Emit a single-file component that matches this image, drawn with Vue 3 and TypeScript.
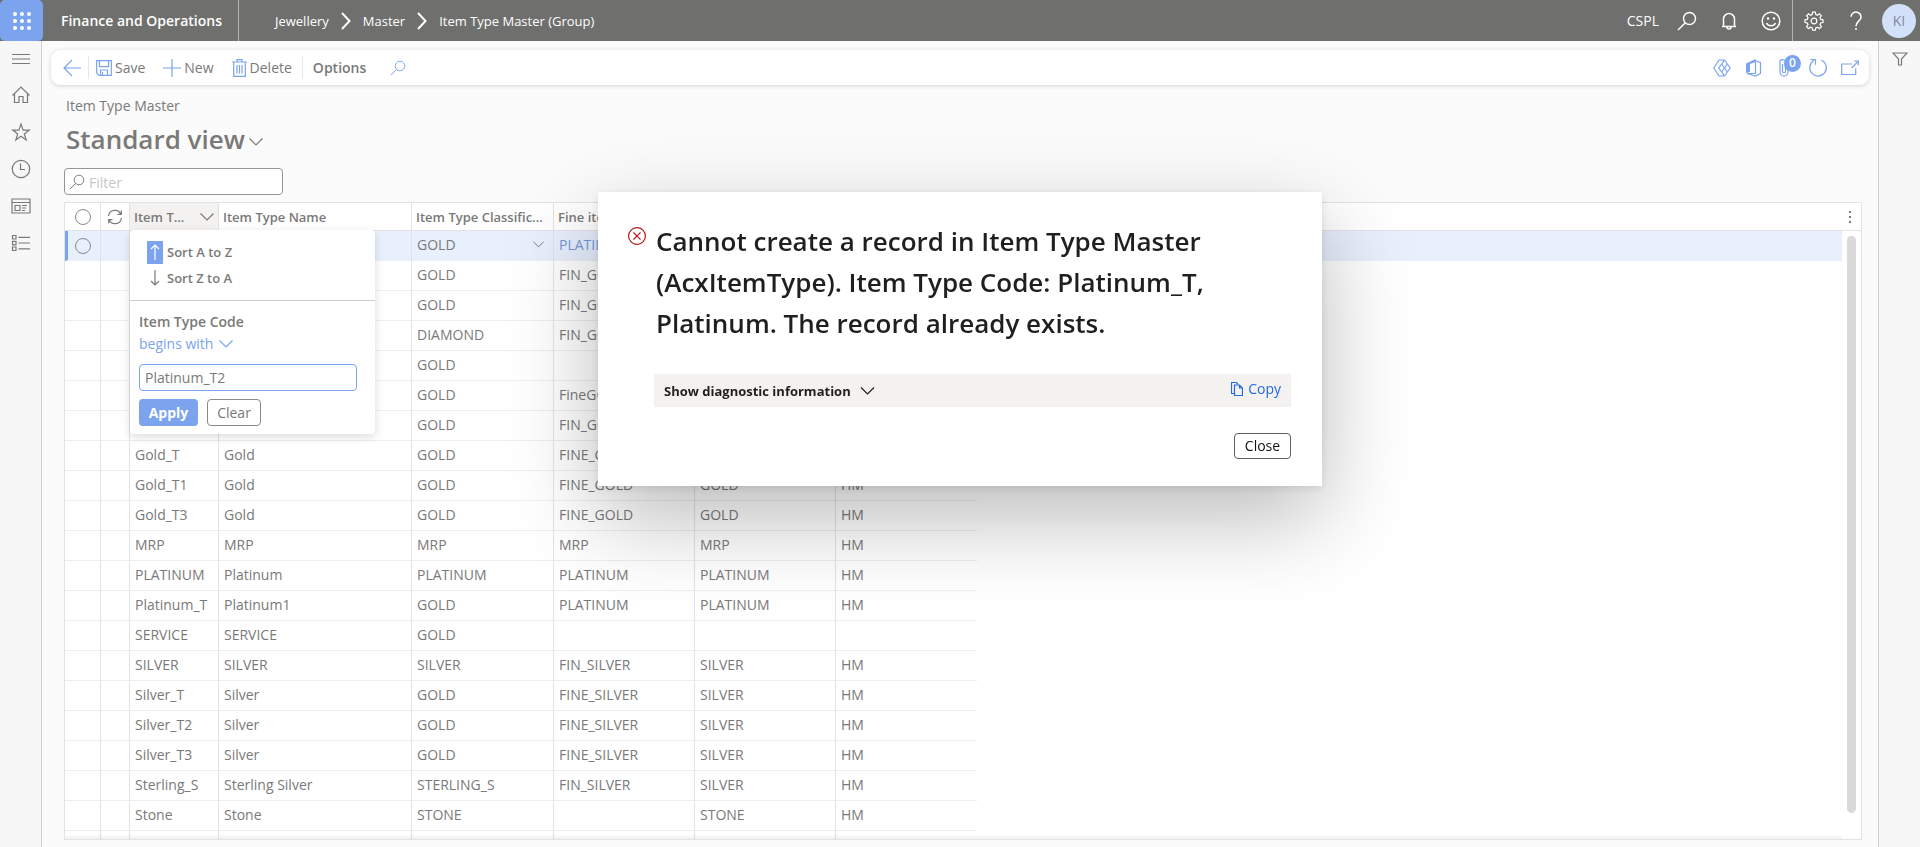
<script setup lang="ts">
import { ref } from 'vue'

interface ItemRow {
  code: string
  name: string
  classification: string
  fine: string
  metal: string
  unit: string
}

const filter = ref('')
const codeFilter = ref('Platinum_T2')

const crumbs: string[] = ['Jewellery', 'Master', 'Item Type Master (Group)']

const r = (code: string, name: string, classification: string, fine: string, metal: string, unit: string): ItemRow => ({
  code, name, classification, fine, metal, unit,
})

const rows: ItemRow[] = [
  r('', '', 'GOLD', 'PLATINUM', '', ''),
  r('', '', 'GOLD', 'FIN_GOLD', '', ''),
  r('', '', 'GOLD', 'FIN_GOLD', '', ''),
  r('', '', 'DIAMOND', 'FIN_GOLD', '', ''),
  r('', '', 'GOLD', '', '', ''),
  r('', '', 'GOLD', 'FineGOLD', '', ''),
  r('', '', 'GOLD', 'FIN_GOLD', '', ''),
  r('Gold_T', 'Gold', 'GOLD', 'FINE_GOLD', '', ''),
  r('Gold_T1', 'Gold', 'GOLD', 'FINE_GOLD', 'GOLD', 'HM'),
  r('Gold_T3', 'Gold', 'GOLD', 'FINE_GOLD', 'GOLD', 'HM'),
  r('MRP', 'MRP', 'MRP', 'MRP', 'MRP', 'HM'),
  r('PLATINUM', 'Platinum', 'PLATINUM', 'PLATINUM', 'PLATINUM', 'HM'),
  r('Platinum_T', 'Platinum1', 'GOLD', 'PLATINUM', 'PLATINUM', 'HM'),
  r('SERVICE', 'SERVICE', 'GOLD', '', '', ''),
  r('SILVER', 'SILVER', 'SILVER', 'FIN_SILVER', 'SILVER', 'HM'),
  r('Silver_T', 'Silver', 'GOLD', 'FINE_SILVER', 'SILVER', 'HM'),
  r('Silver_T2', 'Silver', 'GOLD', 'FINE_SILVER', 'SILVER', 'HM'),
  r('Silver_T3', 'Silver', 'GOLD', 'FINE_SILVER', 'SILVER', 'HM'),
  r('Sterling_S', 'Sterling Silver', 'STERLING_S', 'FIN_SILVER', 'SILVER', 'HM'),
  r('Stone', 'Stone', 'STONE', '', 'STONE', 'HM'),
  r('', '', '', '', '', ''),
]
</script>

<template>
  <div class="app">
    <header class="topbar">
      <button class="launcher" aria-label="App launcher">
        <svg width="18" height="18" viewBox="0 0 18 18" fill="currentColor">
          <template v-for="y in 3" :key="y">
            <circle v-for="x in 3" :key="x" :cx="x * 7 - 5" :cy="y * 7 - 5" r="2" />
          </template>
        </svg>
      </button>
      <a class="brand" href="#">Finance and Operations</a>
      <nav class="crumbs" aria-label="Breadcrumb">
        <template v-for="(c, i) in crumbs" :key="c">
          <svg v-if="i" width="10" height="18" viewBox="0 0 10 18" fill="none" stroke="currentColor" stroke-width="2"><path d="M1 1l7.500 8-7.500 8" /></svg>
          <a href="#">{{ c }}</a>
        </template>
      </nav>
      <div class="top-actions">
        <span class="company">CSPL</span>
        <button aria-label="Search"><svg width="20" height="20" viewBox="0 0 20 20" class="ln strong"><circle cx="12.500" cy="7.500" r="6" /><path d="M8.300 11.700L1 19" /></svg></button>
        <button aria-label="Notifications"><svg width="20" height="20" viewBox="0 0 20 20" class="ln strong"><path d="M3 15.500h14M4.500 15.500V8a5.500 5.500 0 0 1 11 0v7.500M8 16a2 2 0 0 0 4 0" /></svg></button>
        <button aria-label="Feedback"><svg width="20" height="20" viewBox="0 0 20 20" class="ln strong"><circle cx="10" cy="10" r="8.800" /><path d="M5.500 12a5 5 0 0 0 9 0" /><circle cx="7" cy="7.500" r="1.200" fill="currentColor" stroke="none" /><circle cx="13" cy="7.500" r="1.200" fill="currentColor" stroke="none" /></svg></button>
        <span class="bar"></span>
        <button aria-label="Settings"><svg width="20" height="20" viewBox="0 0 20 20" class="ln"><circle cx="10" cy="10" r="2.800" /><path d="M8.600 1.200h2.800l.4 2.300 1.700.7 1.900-1.400 2 2-1.400 1.900.7 1.700 2.300.4v2.800l-2.300.4-.7 1.700 1.400 1.900-2 2-1.900-1.400-1.700.7-.4 2.300H8.600l-.4-2.300-1.700-.7-1.900 1.400-2-2L4 13.700 3.300 12 1 11.600V8.800l2.300-.4L4 6.700 2.600 4.800l2-2 1.900 1.400 1.700-.7z" /></svg></button>
        <button aria-label="Help"><svg width="20" height="20" viewBox="0 0 20 20" class="ln strong"><path d="M5 5.800a5 4.800 0 1 1 8.500 3.500C11.500 11.200 10 12 10 15.200" /><path d="M10 17v2" /></svg></button>
        <button class="avatar" aria-label="Account">KI</button>
      </div>
    </header>

    <div class="body">
      <nav class="rail" aria-label="Main">
        <button aria-label="Expand"><svg width="20" height="20" viewBox="0 0 20 20" class="ln"><path d="M1 5.500h18M1 10h18M1 14.500h18" /></svg></button>
        <button aria-label="Home"><svg width="20" height="20" viewBox="0 0 20 20" class="ln"><path d="M1.500 10.500L10 2l8.500 8.500M3.500 9v8.500h4.500v-6h4v6h4.500V9" /></svg></button>
        <button aria-label="Favorites"><svg width="20" height="20" viewBox="0 0 20 20" class="ln"><path d="M10 2l2.100 6.100h6.200l-5 3.800 1.900 6.100L10 14.300 4.800 18l1.900-6.100-5-3.800h6.200z" /></svg></button>
        <button aria-label="Recent"><svg width="20" height="20" viewBox="0 0 20 20" class="ln"><circle cx="10" cy="10" r="8.700" /><path d="M9.500 4.500v6h4.500" /></svg></button>
        <button aria-label="Workspaces"><svg width="20" height="20" viewBox="0 0 20 20" class="ln"><path d="M1 3h18v14H1zM1 6.500h18M4 9.500h5v5H4zM11 9.500h5M11 12h4M11 14.500h3" /></svg></button>
        <button aria-label="Modules"><svg width="20" height="20" viewBox="0 0 20 20" class="ln"><path d="M1.500 2.500h3.500v3.500H1.500zM1.500 8.300h3.500v3.500H1.500zM1.500 14h3.500v3.500H1.500zM7.500 4.300H19M7.500 10H19M7.500 15.800H19" /></svg></button>
      </nav>

      <main class="main">
        <div class="toolbar">
          <button class="tool back" aria-label="Back"><svg width="18" height="18" viewBox="0 0 18 18" class="ln"><path d="M18 9H1M9 1L1 9l8 8" /></svg></button>
          <span class="sep"></span>
          <button class="tool"><svg width="16" height="16" viewBox="0 0 16 16" class="ln"><path d="M.7.700h14.600v14.600H3L.7 13zM3.500.7v6h9v-6M4.500 15v-5h7v5M6.500 12v3" /></svg>Save</button>
          <button class="tool"><svg width="18" height="18" viewBox="0 0 18 18" class="ln"><path d="M9 0v18M0 9h18" /></svg>New</button>
          <button class="tool delete"><svg width="15" height="18" viewBox="0 0 15 18" class="ln"><path d="M0 3h15M5 3V.7h5V3M1.700 3v14.300h11.600V3M5 6v8.500M7.500 6v8.500M10 6v8.500" /></svg>Delete</button>
          <span class="sep"></span>
          <button class="tool options">Options</button>
          <button class="tool" aria-label="Find"><svg width="16" height="16" viewBox="0 0 20 20" class="ln"><circle cx="12.500" cy="7.500" r="6" /><path d="M8.300 11.700L1 19" /></svg></button>
          <div class="tool-right">
            <button aria-label="Power Apps"><svg width="18" height="18" viewBox="0 0 18 18" class="ln"><path d="M6 1L.8 9 6 17h5.500l5.700-8-5.700-8zM11.500 1L5.800 9l5.700 8M8.600 5l5.800 8M14.400 5l-5.800 8" /></svg></button>
            <button aria-label="Open in Office"><svg width="16" height="18" viewBox="0 0 16 18"><path d="M0 4.500L9.500 0v3L4 5v8l-4 1z" fill="currentColor" /><path d="M1 14.500h8.500V2l5 1.500v11L9.500 17z" class="ln" /></svg></button>
            <button class="attach" aria-label="Attachments"><svg width="14" height="18" viewBox="0 0 14 18" class="ln"><path d="M1 2v11a4 4 0 0 0 8 0V6M3.500 5v7.500a1.500 1.500 0 0 0 3 0V4a3 3 0 0 0-5.500-2" /></svg><span class="badge">0</span></button>
            <button aria-label="Refresh"><svg width="20" height="20" viewBox="0 0 20 20" class="ln"><path d="M13.500 2.200a8.300 8.300 0 1 1-7.500.3M2.500 1.700h5v5" /></svg></button>
            <button aria-label="Open in new window"><svg width="18" height="16" viewBox="0 0 18 16" class="ln"><path d="M11 4H.7v10.500h14V8.500M10.500 8L17 1.500M13 1h4.300v4.300" /></svg></button>
          </div>
        </div>

        <section class="page">
          <p class="caption">Item Type Master</p>
          <h1 class="title">Standard view <svg width="14" height="8" viewBox="0 0 14 8" class="ln"><path d="M.5.500L7 7l6.500-6.500" /></svg></h1>
          <label class="filter">
            <svg width="16" height="16" viewBox="0 0 20 20" class="ln"><circle cx="12.500" cy="7.500" r="6" /><path d="M8.300 11.700L1 19" /></svg>
            <input v-model="filter" type="text" placeholder="Filter" aria-label="Filter" />
          </label>

          <div class="grid">
            <div class="grid-inner">
              <div class="scroll-area">
                <table>
                  <colgroup><col class="c-sel" /><col class="c-ref" /><col class="c-code" /><col class="c-name" /><col class="c-class" /><col class="c-std" /><col class="c-std" /><col class="c-std" /><col /></colgroup>
                  <thead>
                    <tr>
                      <th class="mid"><input class="pick" type="radio" name="all" aria-label="Select all" /></th>
                      <th class="mid"><svg width="16" height="16" viewBox="0 0 16 16" class="ln"><path d="M1.500 7a6.500 6.500 0 0 1 12.300-2M14.500 9a6.500 6.500 0 0 1-12.300 2M14.300 1.500V5.300h-3.800M1.700 14.500v-3.800h3.800" /></svg></th>
                      <th class="active"><div class="head">Item T...<svg width="14" height="8" viewBox="0 0 14 8" class="ln"><path d="M.5.500L7 7l6.500-6.500" /></svg></div></th>
                      <th>Item Type Name</th>
                      <th>Item Type Classific...</th>
                      <th>Fine item</th>
                      <th></th>
                      <th class="last"></th>
                      <th class="rest"></th>
                    </tr>
                  </thead>
                  <tbody>
                    <tr v-for="(row, i) in rows" :key="i" :class="{ selected: i === 0 }">
                      <td class="mid"><input v-if="i === 0" class="pick" type="radio" name="row" aria-label="Select row" /></td>
                      <td></td>
                      <td>{{ row.code }}</td>
                      <td>{{ row.name }}</td>
                      <td><div class="head">{{ row.classification }}<svg v-if="i === 0" width="11" height="7" viewBox="0 0 14 8" class="ln drop"><path d="M.5.500L7 7l6.500-6.500" /></svg></div></td>
                      <td class="link">{{ row.fine }}</td>
                      <td>{{ row.metal }}</td>
                      <td class="last">{{ row.unit }}</td>
                      <td class="rest"></td>
                    </tr>
                  </tbody>
                </table>
              </div>
              <div class="gutter">
                <button class="more" aria-label="Grid options"><svg width="2" height="12" viewBox="0 0 2 12" fill="currentColor"><path d="M0 0h2v2H0zM0 5h2v2H0zM0 10h2v2H0z" /></svg></button>
                <div class="thumb"></div>
              </div>
            </div>

            <form class="menu" @submit.prevent>
              <div class="sorts">
                <button type="button"><span class="arrow on"><svg width="10" height="16" viewBox="0 0 10 16" class="ln"><path d="M5 16V1M1 5l4-4 4 4" /></svg></span>Sort A to Z</button>
                <button type="button"><span class="arrow"><svg width="10" height="16" viewBox="0 0 10 16" class="ln"><path d="M5 0v15M1 11l4 4 4-4" /></svg></span>Sort Z to A</button>
              </div>
              <div class="criteria">
                <label for="code">Item Type Code</label>
                <button type="button" class="op">begins with <svg width="14" height="8" viewBox="0 0 14 8" class="ln"><path d="M.5.500L7 7l6.500-6.500" /></svg></button>
                <input id="code" v-model="codeFilter" type="text" />
                <div class="acts"><button class="apply">Apply</button><button type="button" class="clear">Clear</button></div>
              </div>
            </form>
          </div>
        </section>
      </main>

      <aside class="side"><button aria-label="Filter pane"><svg width="16" height="14" viewBox="0 0 16 14" class="ln"><path d="M1 1h14L9.500 7v6h-3V7z" /></svg></button></aside>
    </div>

    <div class="overlay">
      <section class="dialog" role="alertdialog" aria-labelledby="msg">
        <svg class="err" width="18" height="18" viewBox="0 0 18 18" fill="none" stroke="currentColor"><circle cx="9" cy="9" r="8.400" stroke-width="1.200" /><path d="M5.500 5.500l7 7M12.500 5.500l-7 7" stroke-width="1.200" /></svg>
        <div class="dialog-body">
          <h2 id="msg">Cannot create a record in Item Type Master (AcxItemType). Item Type Code: Platinum_T, Platinum. The record already exists.</h2>
          <div class="diag">
            <button class="show">Show diagnostic information <svg width="15" height="8" viewBox="0 0 14 8" class="ln"><path d="M.5.500L7 7l6.500-6.500" /></svg></button>
            <button class="copy"><svg width="12" height="14" viewBox="0 0 12 14" class="ln"><path d="M3.500 11.500H.5V.5h5l1.500 1.500M3.500 3h5l3 3v7.500h-8zM8.500 3v3h3" /></svg>Copy</button>
          </div>
          <div class="foot"><button class="close">Close</button></div>
        </div>
      </section>
    </div>
  </div>
</template>

<style>
body { margin: 0; }
</style>

<style scoped>
* { box-sizing: border-box; }
.app { --ink: #7a7978; --blue: #7ba3ee; --line: #e3e3e3; display: flex; flex-direction: column; height: 100vh; overflow: hidden; background: #fbfbfb; color: var(--ink); font: 14px/20px "Open Sans", "Noto Sans", sans-serif; }
button { padding: 0; border: 0; background: none; color: inherit; font: inherit; display: flex; align-items: center; justify-content: center; }
a { color: inherit; text-decoration: none; }
svg { flex: none; display: block; }
.ln { fill: none; stroke: currentColor; stroke-width: 1.2; }
.strong { stroke-width: 1.5; }

.topbar { display: flex; align-items: center; height: 41px; flex: none; background: #6f6f6d; color: #fff; }
.launcher { width: 43px; height: 41px; border-radius: 5px; background: var(--blue); }
.brand { align-self: stretch; display: flex; align-items: center; padding: 0 16px 0 18px; border-right: 1px solid #b4b4b3; font-weight: 600; }
.crumbs { display: flex; align-items: center; gap: 12px; margin-left: 36px; font-size: 13px; }
.top-actions { display: flex; align-items: center; margin-left: auto; height: 100%; }
.top-actions button { width: 42px; }
.company { margin-right: 7px; }
.bar { width: 1px; height: 100%; background: #b4b4b3; }
.top-actions .avatar { width: 34px; height: 34px; margin: 0 4px 0 5px; border-radius: 50%; background: #d3e0f9; color: #81899a; }

.body { display: flex; flex: 1; min-height: 0; }
.rail { width: 42px; flex: none; border-right: 1px solid #cfcfcf; background: #f7f7f7; }
.rail button { width: 100%; height: 37px; }
.rail button:first-child { height: 35px; }
.side { width: 42px; flex: none; border-left: 1px solid #cfcfcf; background: #f7f7f7; }
.side button { width: 100%; height: 35px; }
.main { display: flex; flex: 1; min-width: 0; flex-direction: column; padding: 9px 9px 7px; }

.toolbar { display: flex; align-items: center; flex: none; height: 35px; padding: 0 3px 0 12px; border-radius: 9px; background: #fff; box-shadow: 0 1px 4px rgba(0, 0, 0, 0.16); }
.tool { gap: 3px; margin-right: 18px; }
.back { margin-right: 7px; }
.delete { margin-right: 10px; }
.toolbar .tool svg, .tool-right { color: var(--blue); }
.sep { width: 1px; height: 23px; margin-right: 7px; background: #e6e6e6; }
.options { margin: 0 24px 0 3px; font-weight: 600; }
.tool-right { display: flex; align-items: center; margin-left: auto; }
.tool-right button { position: relative; width: 32px; }
.badge { position: absolute; top: -4px; right: 1px; width: 17px; height: 17px; border-radius: 50%; background: var(--blue); color: #fff; font-size: 12px; line-height: 16px; font-weight: 600; }

.page { display: flex; flex: 1; min-height: 0; flex-direction: column; padding: 11px 7px 0 13px; }
.caption { margin: 0 0 0 2px; }
.title { display: flex; align-items: center; gap: 4px; margin: 3px 0 0 2px; font-size: 26px; line-height: 40px; font-weight: 600; }
.title svg { margin-top: 6px; }
.filter { display: flex; align-items: center; flex: none; gap: 4px; width: 219px; height: 27px; margin-top: 9px; padding: 0 4px; border: 1px solid #969594; border-radius: 4px; background: #fff; }
.filter input { flex: 1; min-width: 0; padding: 3px 0 0; border: 0; outline: 0; background: none; font: inherit; color: inherit; }
.filter input::placeholder { color: #c6c6c6; opacity: 1; }

.grid { position: relative; flex: 1; min-height: 0; margin-top: 7px; }
.grid-inner { position: relative; display: flex; height: 100%; border: 1px solid var(--line); background: #fff; overflow: hidden; }
.scroll-area { position: relative; flex: 1; min-width: 0; }
.scroll-area::after { content: ""; position: absolute; left: 0; right: 0; bottom: 0; height: 5px; background: linear-gradient(rgba(0, 0, 0, 0), rgba(0, 0, 0, 0.06)); }
.gutter { display: flex; flex-direction: column; width: 19px; flex: none; }
.more { height: 28px; flex: none; padding-right: 4px; border-bottom: 1px solid var(--line); }
.thumb { flex: 1; margin: 5px 5px 26px; border-radius: 5px; background: #dadada; }
table { width: 100%; table-layout: fixed; border-collapse: separate; border-spacing: 0; }
.c-sel { width: 36px; }
.c-ref { width: 29px; }
.c-code { width: 89px; }
.c-name { width: 193px; }
.c-class { width: 142px; }
.c-std { width: 141px; }
th, td { padding: 0 4px; border-right: 1px solid var(--line); border-bottom: 1px solid #eee; text-align: left; white-space: nowrap; overflow: hidden; }
th { height: 28px; border-bottom: 1px solid var(--line); font-size: 13px; font-weight: 600; }
td { height: 30px; padding-bottom: 2px; }
td:not(.mid) { padding-left: 5px; }
.mid { padding: 0; text-align: center; }
.mid svg { margin: 0 auto; }
.active { background: #f3f2f1; }
.last { border-right: 0; }
.rest { border-right: 0; }
td.rest { border-bottom: 0; }
.head { display: flex; align-items: center; justify-content: space-between; }
.drop { margin-right: 5px; }
.selected td { background: #e8effd; }
.selected td:first-child { padding-right: 3px; border-left: 3px solid var(--blue); }
.selected .link { color: #7398dc; }
.pick { appearance: none; display: block; width: 16px; height: 16px; margin: 0 auto; border: 1px solid #8a8988; border-radius: 50%; }

.menu { position: absolute; top: 28px; left: 66px; width: 245px; border-radius: 4px; background: #fff; box-shadow: 0 3px 10px rgba(0, 0, 0, 0.14); }
.sorts { padding: 9px 17px 9px; border-bottom: 1px solid #ccc; font-weight: 600; font-size: 13px; }
.sorts button { height: 26px; gap: 4px; }
.arrow { display: flex; align-items: center; justify-content: center; width: 16px; height: 23px; }
.on { background: var(--blue); color: #fff; }
.criteria { display: flex; flex-direction: column; align-items: flex-start; padding: 11px 18px 8px 9px; }
.criteria label { font-weight: 600; }
.op { gap: 6px; color: var(--blue); line-height: 24px; }
.criteria input { width: 100%; height: 27px; margin: 8px 0; padding: 0 5px; border: 1px solid var(--blue); border-radius: 4px; outline: 0; color: inherit; font: inherit; }
.acts { display: flex; gap: 9px; }
.acts button { height: 27px; border-radius: 4px; }
.acts .apply { width: 59px; background: var(--blue); color: #fff; font-weight: 700; }
.acts .clear { width: 54px; border: 1px solid #8a8988; background: #fff; }

.overlay { position: fixed; inset: 0; display: flex; align-items: flex-start; justify-content: center; padding-top: 192px; }
.dialog { display: flex; gap: 8px; width: 724px; padding: 29px 31px 27px 30px; background: #fff; color: #201f1e; box-shadow: 0 32px 84px rgba(0, 0, 0, 0.27), 0 2px 8px rgba(0, 0, 0, 0.1); }
.err { margin-top: 6px; color: #b3151b; }
.dialog-body { flex: 1; min-width: 0; }
h2 { margin: 0 60px 0 2px; font-size: 26px; line-height: 41px; font-weight: 600; }
.diag { display: flex; align-items: center; justify-content: space-between; height: 33px; margin: 30px 0 26px; padding: 0 10px; background: #f3f2f1; }
.show { gap: 9px; font-size: 13px; font-weight: 700; }
.copy { gap: 5px; padding-bottom: 4px; color: #2568e3; }
.foot { display: flex; justify-content: flex-end; }
.close { width: 57px; height: 26px; border: 1px solid #605e5c; border-radius: 4px; background: #fff; color: #111; }
</style>
